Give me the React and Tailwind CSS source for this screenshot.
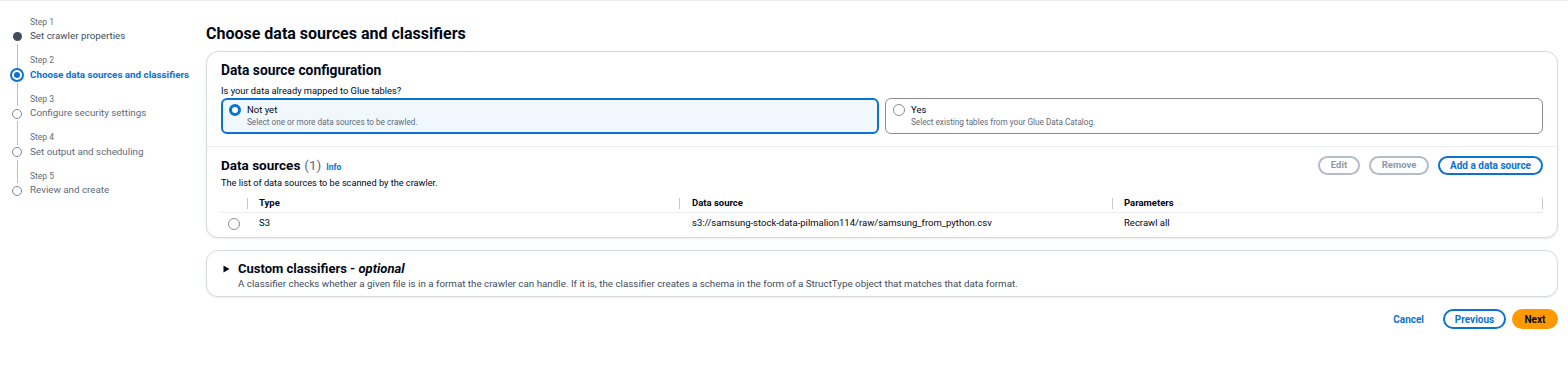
import React from 'react';

const steps = [
  { n: 1, label: 'Set crawler properties', state: 'done' },
  { n: 2, label: 'Choose data sources and classifiers', state: 'current' },
  { n: 3, label: 'Configure security settings', state: 'todo' },
  { n: 4, label: 'Set output and scheduling', state: 'todo' },
  { n: 5, label: 'Review and create', state: 'todo' },
];

const StepDot = ({ state }) => {
  if (state === 'done') return <span className="w-[9px] h-[9px] rounded-full bg-[#414d5c]" />;
  if (state === 'current')
    return (
      <span className="w-[14px] h-[14px] rounded-full border-2 border-[#0972d3] bg-white flex items-center justify-center">
        <span className="w-[6px] h-[6px] rounded-full bg-[#0972d3]" />
      </span>
    );
  return <span className="w-[10px] h-[10px] rounded-full border border-[#7d8998] bg-white" />;
};

const Radio = ({ checked }) =>
  checked ? (
    <span className="w-[12px] h-[12px] rounded-full border-[3.5px] border-[#0972d3] bg-white shrink-0" />
  ) : (
    <span className="w-[12px] h-[12px] rounded-full border border-[#8c8c94] bg-white shrink-0" />
  );

const HeadCell = ({ children, last, pad = 'pl-[11px]' }) => (
  <div className="flex items-center h-full">
    <span className="w-px h-[11px] bg-[#c6c6cd]" />
    <span className={`${pad} flex-1 text-[9.5px] font-bold text-[#000716]`}>{children}</span>
    {last && <span className="w-px h-[11px] bg-[#c6c6cd]" />}
  </div>
);

export default function App() {
  return (
    <div className="w-full h-[386px] bg-white border-t border-[#e9ebed] flex font-['Roboto',sans-serif] text-[#000716]">
      {/* wizard steps */}
      <nav className="w-[206px] shrink-0 pt-[14px] pl-[5px]">
        {steps.map((s, i) => (
          <div key={s.n} className="flex h-[38.5px]">
            <div className="w-[24px] flex flex-col items-center">
              <span className={`w-px h-[14px] ${i === 0 ? '' : 'bg-[#b6bec9]'}`} />
              <span className="h-[15px] flex items-center justify-center">
                <StepDot state={s.state} />
              </span>
              <span className={`w-px flex-1 ${i === steps.length - 1 ? '' : 'bg-[#b6bec9]'}`} />
            </div>
            <div className="pl-px">
              <div className="h-[14px] flex items-center text-[8.5px] text-[#5f6b7a]">Step {s.n}</div>
              <div
                className={`h-[15px] flex items-center text-[9.8px] ${
                  s.state === 'current'
                    ? 'font-bold text-[#0972d3]'
                    : s.state === 'done'
                    ? 'text-[#414d5c]'
                    : 'text-[#5f6b7a]'
                }`}
              >
                {s.label}
              </div>
            </div>
          </div>
        ))}
      </nav>

      {/* main content */}
      <main className="flex-1 pr-[10px] pt-[23px]">
        <h1 className="text-[16px] leading-[20px] font-bold">Choose data sources and classifiers</h1>

        <div className="mt-[7px] rounded-[12px] border border-[#d5dbdb] shadow-[0_1px_2px_rgba(0,7,22,0.08)] bg-white">
          <div className="px-[14px] pt-[8px] pb-[12px]">
            <h2 className="text-[13.8px] leading-[20px] font-bold">Data source configuration</h2>
            <p className="mt-[4px] text-[9.3px] leading-[14px]">Is your data already mapped to Glue tables?</p>
            <div className="grid grid-cols-2 gap-[6px]">
              <div className="h-[36px] rounded-[6px] border-2 border-[#0972d3] bg-[#f0f8fe] flex pl-[6px] pt-[3px]">
                <span className="h-[13px] flex items-center">
                  <Radio checked />
                </span>
                <div className="pl-[6px]">
                  <div className="text-[9.5px] leading-[13px]">Not yet</div>
                  <div className="text-[8.2px] leading-[12px] text-[#5f6b7a]">Select one or more data sources to be crawled.</div>
                </div>
              </div>
              <div className="h-[36px] rounded-[6px] border border-[#8c8c94] bg-white flex pl-[7px] pt-[4px]">
                <span className="h-[13px] flex items-center">
                  <Radio />
                </span>
                <div className="pl-[6px]">
                  <div className="text-[9.5px] leading-[13px]">Yes</div>
                  <div className="text-[8.2px] leading-[12px] text-[#5f6b7a]">Select existing tables from your Glue Data Catalog.</div>
                </div>
              </div>
            </div>
          </div>

          <div className="border-t border-[#e9ebed] px-[14px] pt-[8px] pb-[3px]">
            <div className="flex items-center justify-between h-[20px]">
              <div className="flex items-baseline">
                <h2 className="text-[13.5px] font-bold">Data sources</h2>
                <span className="ml-[4px] text-[13.5px] text-[#5f6b7a]">(1)</span>
                <span className="ml-[5px] text-[8.5px] font-bold text-[#0972d3]">Info</span>
              </div>
              <div className="flex items-center gap-[9px]">
                <button className="w-[42px] h-[19px] rounded-full border-2 border-[#b4bcc6] text-[9.5px] font-bold text-[#8d99a8] flex items-center justify-center">
                  Edit
                </button>
                <button className="w-[60px] h-[19px] rounded-full border-2 border-[#b4bcc6] text-[9.5px] font-bold text-[#8d99a8] flex items-center justify-center">
                  Remove
                </button>
                <button className="w-[105px] h-[19px] rounded-full border-2 border-[#0972d3] text-[10px] font-bold text-[#0972d3] flex items-center justify-center">
                  Add a data source
                </button>
              </div>
            </div>
            <p className="mt-[1px] text-[9.2px] leading-[14px]">The list of data sources to be scanned by the crawler.</p>

            <div className="mt-[4px] grid grid-cols-[26px_432px_433px_1fr]">
              <div className="h-[19px] border-b border-[#e9ebed]" />
              <div className="h-[19px] border-b border-[#e9ebed]">
                <HeadCell>Type</HeadCell>
              </div>
              <div className="h-[19px] border-b border-[#e9ebed]">
                <HeadCell pad="pl-[12px]">Data source</HeadCell>
              </div>
              <div className="h-[19px] border-b border-[#e9ebed]">
                <HeadCell last>Parameters</HeadCell>
              </div>

              <div className="h-[21px] flex items-center justify-center">
                <Radio />
              </div>
              <div className="h-[21px] flex items-center pl-[12px] text-[9.5px]">S3</div>
              <div className="h-[21px] flex items-center pl-[13px] text-[9.5px]">
                s3://samsung-stock-data-pilmalion114/raw/samsung_from_python.csv
              </div>
              <div className="h-[21px] flex items-center pl-[12px] text-[9.5px]">Recrawl all</div>
            </div>
          </div>
        </div>

        <div className="mt-[12px] rounded-[12px] border border-[#d5dbdb] shadow-[0_1px_2px_rgba(0,7,22,0.08)] bg-white pl-[16px] pt-[9px] pb-[6px] flex">
          <div className="w-[15px] h-[17px] flex items-center">
            <svg width="7" height="8" viewBox="0 0 7 8">
              <path d="M0.5 0.5 L6.5 4 L0.5 7.5 Z" fill="#000716" />
            </svg>
          </div>
          <div>
            <h2 className="text-[13px] leading-[17px] font-bold">
              Custom classifiers - <i>optional</i>
            </h2>
            <p className="text-[9.8px] leading-[13px] text-[#414d5c]">
              A classifier checks whether a given file is in a format the crawler can handle. If it is, the classifier creates a schema in the form of a StructType object that matches that data format.
            </p>
          </div>
        </div>

        <div className="mt-[12px] flex justify-end items-center">
          <button className="mr-[19px] text-[10px] font-bold text-[#0972d3]">Cancel</button>
          <button className="w-[63px] h-[20px] rounded-full border-2 border-[#0972d3] text-[10px] font-bold text-[#0972d3] flex items-center justify-center">
            Previous
          </button>
          <button className="ml-[6px] w-[46px] h-[20px] rounded-full bg-[#ff9900] text-[10px] font-bold text-[#000716] flex items-center justify-center">
            Next
          </button>
        </div>
      </main>
    </div>
  );
}
